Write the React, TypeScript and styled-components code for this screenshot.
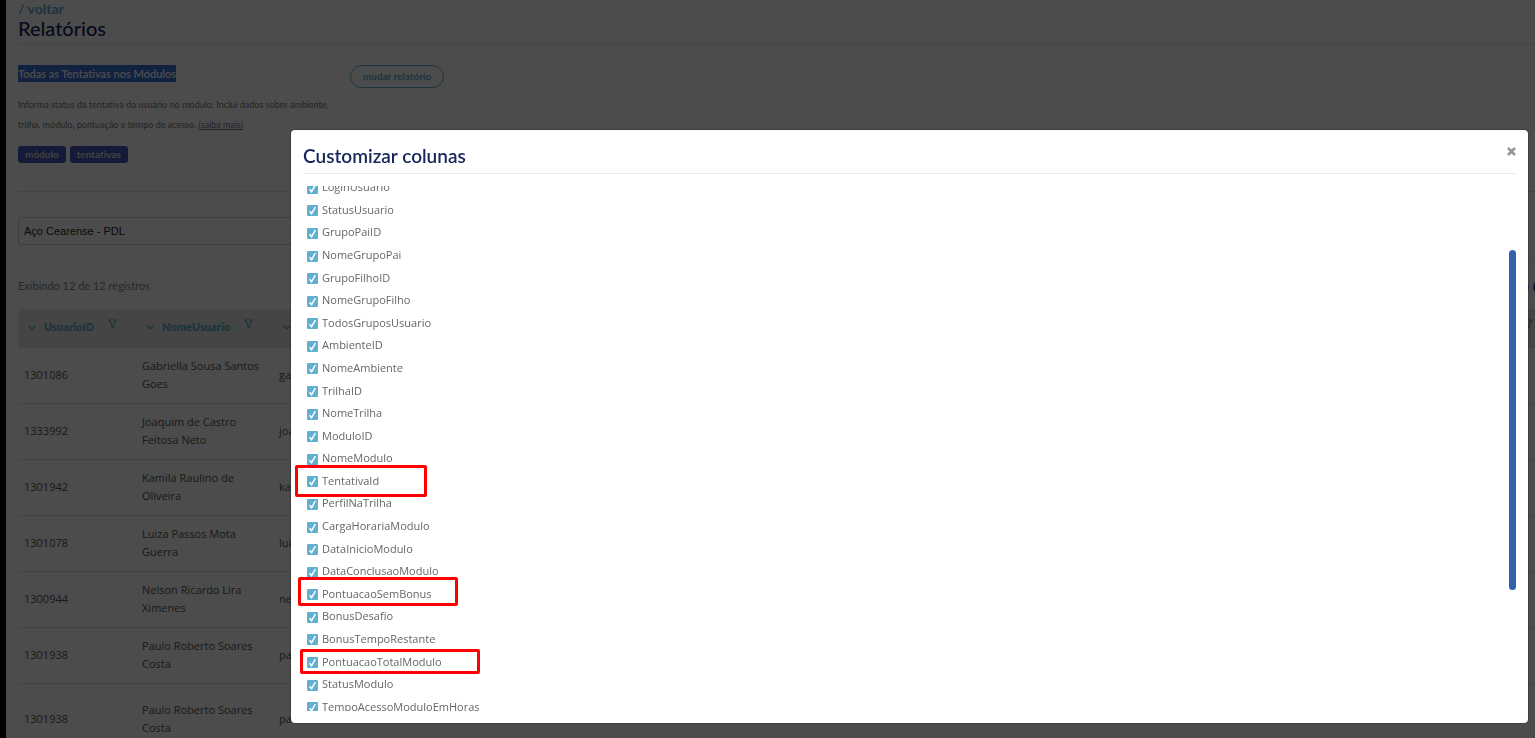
import React from "react";
import styled, { createGlobalStyle } from "styled-components";

const Global = createGlobalStyle`
  *{box-sizing:border-box}
  html,body,#root{height:100%}
  body{margin:0;overflow:hidden;font-family:Lato,"Open Sans",sans-serif;font-variant-ligatures:none;color:#555;background:#fff}
  h1,h2,h3,p{margin:0;font-weight:400}
`;

const Shell = styled.div`
  height: 100%;
  display: flex;
  overflow: hidden;
`;
const Rail = styled.div`
  width: 6px;
  flex: none;
  background: #000;
`;
const Page = styled.main`
  flex: 1;
  min-width: 0;
  padding-left: 12px;
`;
const PageHeader = styled.header`
  height: 45px;
  border-bottom: 1px solid #e4e4e4;
`;
const BackLink = styled.a`
  display: block;
  font-size: 14px;
  line-height: 18px;
  font-weight: 700;
  color: #62afd2;
  text-decoration: none;
`;
const Title = styled.h1`
  font-size: 20px;
  line-height: 20px;
  font-weight: 500;
  color: #14275b;
`;
const Report = styled.section`
  height: 147px;
  padding-top: 20px;
  display: flex;
  align-items: flex-start;
  gap: 20px;
  border-bottom: 1px solid #e4e4e4;
`;
const ReportInfo = styled.div`
  width: 312px;
`;
const ReportName = styled.h2`
  font-size: 11px;
  line-height: 17px;
  font-weight: 600;
  span {
    display: inline-block;
    background: #3a70d6;
    color: #fff;
  }
`;
const ReportText = styled.p`
  margin-top: 13px;
  font-size: 9px;
  line-height: 20px;
  color: #777;
  a {
    color: inherit;
  }
`;
const Tags = styled.div`
  display: flex;
  gap: 4px;
  margin-top: 11px;
`;
const Tag = styled.span`
  padding: 0 7px;
  font-size: 10px;
  line-height: 17px;
  font-weight: 700;
  border-radius: 3px;
  background: #4459b8;
  color: #ddd;
`;
const ChangeButton = styled.button`
  width: 94px;
  height: 23px;
  padding: 0 0 2px;
  font: 700 10px/18px Lato, sans-serif;
  color: #62afd2;
  background: none;
  border: 1px solid #62afd2;
  border-radius: 12px;
`;
const Filters = styled.div`
  height: 72px;
  padding-top: 25px;
  border-bottom: 1px solid #f4f4f4;
`;
const ClientSelect = styled.select`
  width: 50%;
  height: 28px;
  padding: 0 5px;
  appearance: none;
  font: 11px "Liberation Sans", sans-serif;
  color: #222;
  background: #fff;
  border: 1px solid #ccc;
  border-radius: 3px;
`;
const Summary = styled.div`
  height: 45px;
  padding-top: 14px;
  margin-right: -12px;
  display: flex;
  justify-content: space-between;
  font-size: 11px;
  line-height: 16px;
  color: #888;
`;
const Actions = styled.div`
  display: flex;
  gap: 4px;
`;
const RoundButton = styled.button<{ $color: string }>`
  width: 14px;
  height: 14px;
  margin-top: 2px;
  padding: 0;
  border: 0;
  border-radius: 50%;
  background: ${(p) => p.$color};
`;
const Table = styled.table`
  width: 100%;
  table-layout: fixed;
  border-collapse: separate;
  border-spacing: 0;
  font-family: "Open Sans", sans-serif;
  font-size: 11px;
  line-height: 18px;
`;
const HeadCell = styled.th`
  height: 39px;
  padding: 0 2px 4px 9px;
  text-align: left;
  white-space: nowrap;
  background: #e7e7e7;
  color: #62afd2;
  font-family: Lato, sans-serif;
  font-weight: 800;
`;
const HeadContent = styled.span<{ $spread?: boolean }>`
  display: flex;
  align-items: center;
  justify-content: ${(p) => (p.$spread ? "space-between" : "flex-start")};
  gap: 7px;
`;
const Cell = styled.td<{ $tall?: boolean }>`
  height: ${(p) => (p.$tall ? 72 : 56)}px;
  padding: 0 10px 2px 6px;
  border-bottom: 1px solid #e0e0e0;
`;

const Backdrop = styled.div`
  position: fixed;
  inset: 0;
  padding: 130px 7px 15px 291px;
  display: flex;
  background: rgba(0, 0, 0, 0.7);
`;
const Dialog = styled.section`
  position: relative;
  flex: 1;
  min-width: 0;
  display: flex;
  flex-direction: column;
  padding: 0 12px 12px;
  background: #fff;
  border-radius: 4px;
  box-shadow: 0 0 2px rgba(0, 0, 0, 0.6);
`;
const DialogHeader = styled.header`
  height: 44px;
  flex: none;
  display: flex;
  align-items: center;
  justify-content: space-between;
  padding-top: 8px;
  border-bottom: 1px solid #e9e9e9;
`;
const DialogTitle = styled.h2`
  font-size: 19px;
  line-height: 28px;
  font-weight: 600;
  color: #14275b;
`;
const CloseButton = styled.button`
  display: flex;
  padding: 0;
  margin: -8px 0 0;
  border: 0;
  background: none;
`;
const DialogBody = styled.div`
  flex: 1;
  min-height: 0;
  margin-top: 12px;
  display: flex;
  justify-content: space-between;
  overflow: hidden;
`;
const Options = styled.div`
  display: grid;
  grid-auto-rows: 1fr;
  height: 542px;
  margin: -9px 0 0 4px;
`;
const Option = styled.label`
  display: flex;
  align-items: center;
  gap: 4px;
  font-family: "Open Sans", sans-serif;
  font-size: 11px;
  line-height: 16px;
  color: #666;
`;
const OptionText = styled.span`
  padding-bottom: 2px;
`;
const Check = styled.input`
  appearance: none;
  width: 11px;
  height: 11px;
  margin: 0;
  border-radius: 1px;
  background: #62afd2
    url("data:image/svg+xml,%3Csvg xmlns='http://www.w3.org/2000/svg' viewBox='0 0 11 11'%3E%3Cpath d='M2.6 6.2 4.6 8.6 8.4 2' fill='none' stroke='white' stroke-width='1.5'/%3E%3C/svg%3E");
`;
const Track = styled.div`
  width: 7px;
  padding-top: 64px;
`;
const Thumb = styled.div`
  height: 340px;
  border-radius: 4px;
  background: #335fae;
`;
const Mark = styled.div<{ $x: number; $y: number; $w: number; $h: number }>`
  position: absolute;
  left: ${(p) => p.$x}px;
  top: ${(p) => p.$y}px;
  width: ${(p) => p.$w}px;
  height: ${(p) => p.$h}px;
  border: 3px solid #f00;
  border-radius: 2px;
  pointer-events: none;
`;

const columns = [
  "LoginUsuario", "StatusUsuario", "GrupoPaiID", "NomeGrupoPai", "GrupoFilhoID", "NomeGrupoFilho",
  "TodosGruposUsuario", "AmbienteID", "NomeAmbiente", "TrilhaID", "NomeTrilha", "ModuloID",
  "NomeModulo", "TentativaId", "PerfilNaTrilha", "CargaHorariaModulo", "DataInicioModulo",
  "DataConclusaoModulo", "PontuacaoSemBonus", "BonusDesafio", "BonusTempoRestante",
  "PontuacaoTotalModulo", "StatusModulo", "TempoAcessoModuloEmHoras",
];

const users = [
  ["1301086", "Gabriella Sousa Santos Goes", "ga"],
  ["1333992", "Joaquim de Castro Feitosa Neto", "joa"],
  ["1301942", "Kamila Raulino de Oliveira", "ka"],
  ["1301078", "Luiza Passos Mota Guerra", "lui"],
  ["1300944", "Nelson Ricardo Lira Ximenes", "ne"],
  ["1301938", "Paulo Roberto Soares Costa", "pa"],
  ["1301938", "Paulo Roberto Soares Costa", "pa"],
];

const Chevron = () => (
  <svg width="10" height="10" viewBox="0 0 10 10" fill="none" stroke="currentColor" strokeWidth="1.5">
    <path d="M1.5 3.5 5 7l3.500-3.500" />
  </svg>
);
const Funnel = styled(({ className }: { className?: string }) => (
  <svg className={className} width="9" height="10" viewBox="0 0 9 10" fill="none" stroke="currentColor" strokeWidth="1.200">
    <path d="M.8 1h7.400L5.500 4.800V8.500l-2-1V4.800z" />
  </svg>
))`
  margin: 0 0 5px 7px;
`;

export default function App() {
  return (
    <>
      <Global />
      <Shell>
        <Rail />
        <Page>
          <PageHeader>
            <BackLink href="#">/ voltar</BackLink>
            <Title>Relatórios</Title>
          </PageHeader>
          <Report>
            <ReportInfo>
              <ReportName><span>Todas as Tentativas nos Módulos</span></ReportName>
              <ReportText>
                Informa status da tentativa do usuário no módulo. Inclui dados sobre ambiente,
                trilha, módulo, pontuação e tempo de acesso. <a href="#">(saiba mais)</a>
              </ReportText>
              <Tags><Tag>módulo</Tag><Tag>tentativas</Tag></Tags>
            </ReportInfo>
            <ChangeButton>mudar relatório</ChangeButton>
          </Report>
          <Filters>
            <ClientSelect aria-label="Cliente"><option>Aço Cearense - PDL</option></ClientSelect>
          </Filters>
          <Summary>
            Exibindo 12 de 12 registros
            <Actions>
              <RoundButton $color="#62afd2" aria-label="Colunas" />
              <RoundButton $color="#3344aa" aria-label="Exportar" />
            </Actions>
          </Summary>
          <Table>
            <colgroup><col style={{ width: 118 }} /><col style={{ width: 137 }} /><col /></colgroup>
            <thead>
              <tr>
                <HeadCell><HeadContent><Chevron />UsuarioID<Funnel /></HeadContent></HeadCell>
                <HeadCell><HeadContent><Chevron />NomeUsuario<Funnel /></HeadContent></HeadCell>
                <HeadCell><HeadContent $spread><Chevron /><Funnel /></HeadContent></HeadCell>
              </tr>
            </thead>
            <tbody>
              {users.map((u, r) => (
                <tr key={r}>{u.map((t, c) => <Cell key={c} $tall={r === 6}>{t}</Cell>)}</tr>
              ))}
            </tbody>
          </Table>
        </Page>
      </Shell>
      <Backdrop>
        <Dialog role="dialog" aria-labelledby="dialog-title">
          <DialogHeader>
            <DialogTitle id="dialog-title">Customizar colunas</DialogTitle>
            <CloseButton aria-label="Fechar">
              <svg width="9" height="9" viewBox="0 0 9 9" stroke="#949494" strokeWidth="2.500"><path d="M1 1l7 7M8 1 1 8" /></svg>
            </CloseButton>
          </DialogHeader>
          <DialogBody>
            <Options>
              {columns.map((c) => (
                <Option key={c}><Check type="checkbox" defaultChecked /><OptionText>{c}</OptionText></Option>
              ))}
            </Options>
            <Track><Thumb /></Track>
          </DialogBody>
          <Mark $x={4} $y={335} $w={132} $h={32} />
          <Mark $x={7} $y={447} $w={160} $h={29} />
          <Mark $x={9} $y={519} $w={180} $h={25} />
        </Dialog>
      </Backdrop>
    </>
  );
}
